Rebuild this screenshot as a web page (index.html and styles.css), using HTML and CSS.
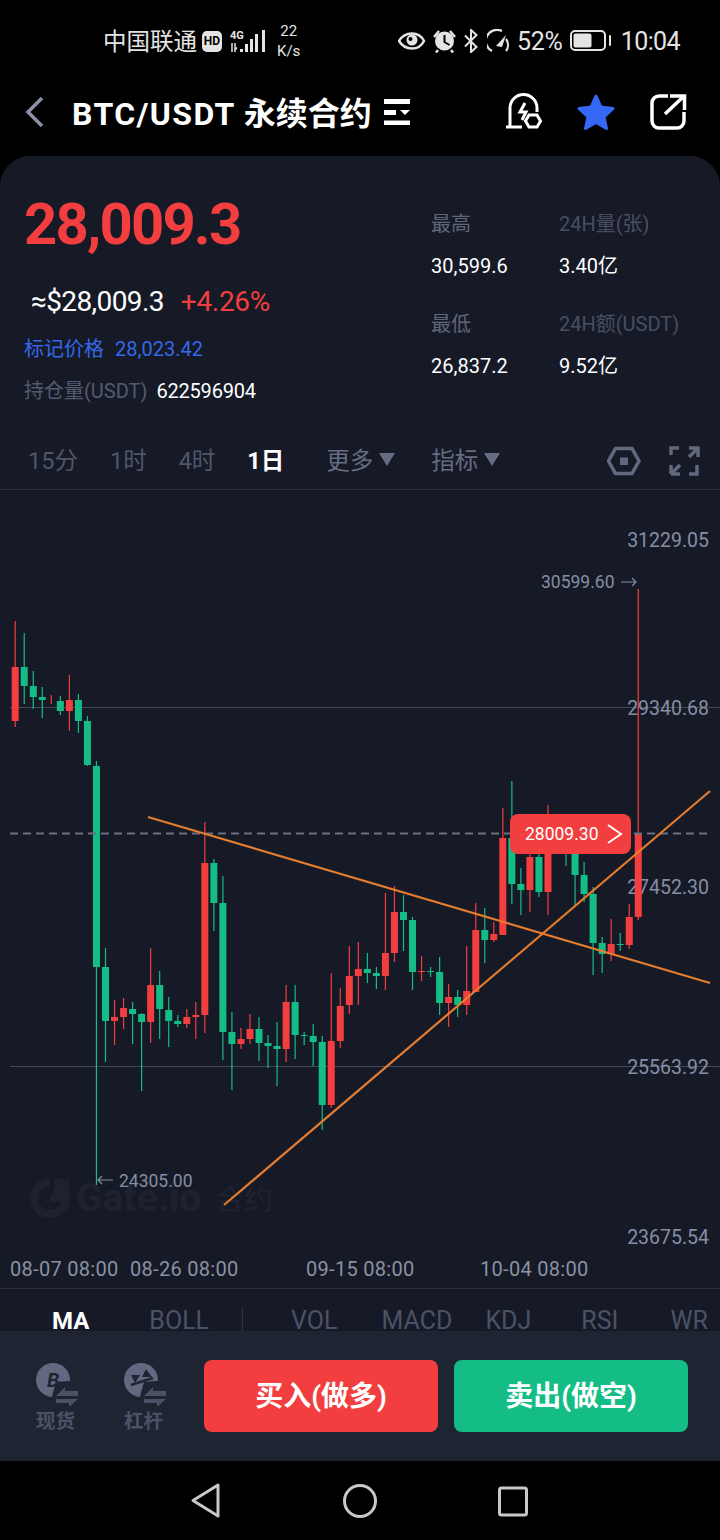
FILE: index.html
```html
<!DOCTYPE html>
<html lang="zh-CN">
<head>
    <meta charset="UTF-8">
    <meta name="viewport" content="width=device-width, initial-scale=1.0">
    <title>BTC/USDT 永续合约</title>
    <link rel="stylesheet" href="styles.css">
</head>
<body>
<div class="phone">

    <!-- Status Bar -->
    <div class="status-bar">
        <span class="carrier">中国联通</span>
        <span class="hd-badge">HD</span>
        <svg class="signal" width="38" height="26" viewBox="229 28 38 26">
            <text x="230" y="39" class="signal-text">4G</text>
            <path d="M232 43v9M235 45v5l2-2.500M235 43v9" stroke="#e4e4e4" stroke-width="1.500" fill="none"/>
            <rect x="240" y="49" width="3" height="3" fill="#e4e4e4"/>
            <rect x="245" y="44" width="3" height="8" fill="#e4e4e4"/>
            <rect x="250" y="39" width="3" height="13" fill="#e4e4e4"/>
            <rect x="255" y="34" width="3" height="18" fill="#e4e4e4"/>
            <rect x="262" y="30" width="3" height="22" fill="#e4e4e4"/>
        </svg>
        <div class="net-speed"><span>22</span><span>K/s</span></div>

        <div class="status-right">
            <svg width="28" height="20" viewBox="401 32 28 20">
                <path d="M402 42c6-10 20-10 25 0c-5 10-19 10-25 0z" fill="none" stroke="#e4e4e4" stroke-width="2.500"/>
                <circle cx="415" cy="41" r="5.500" fill="#e4e4e4"/>
                <circle cx="413.500" cy="40" r="2" fill="#000"/>
            </svg>
            <svg class="ml-6" width="25" height="24" viewBox="435 29 25 24">
                <circle cx="447.500" cy="41" r="9.500" fill="#e4e4e4"/>
                <path d="M447.500 35v7l5 3" fill="none" stroke="#000" stroke-width="2"/>
                <path d="M437 37l5-6M458 37l-5-6M441 50l-2 2.500M454 50l2 2.500" stroke="#e4e4e4" stroke-width="2.500" fill="none"/>
            </svg>
            <svg class="ml-7" width="15" height="24" viewBox="467 29 15 24">
                <path d="M468 35.500l11.500 11.500l-5.500 5v-22l5.500 5l-11.500 11.500" fill="none" stroke="#e4e4e4" stroke-width="2"/>
            </svg>
            <svg class="ml-8" width="25" height="24" viewBox="490 29 25 24">
                <path d="M495 51a10.500 10.500 0 0 1 10-20" fill="none" stroke="#e4e4e4" stroke-width="2.200"/>
                <path d="M509 39a10 10 0 0 1 0 12" fill="none" stroke="#e4e4e4" stroke-width="2.200"/>
                <path d="M499 46l10-11l-4 12z" fill="#e4e4e4"/>
            </svg>
            <span class="battery-pct">52%</span>
            <svg class="ml-7" width="42" height="22" viewBox="571 31 42 22">
                <rect x="572" y="32" width="34" height="19" rx="4" fill="none" stroke="#e4e4e4" stroke-width="2"/>
                <rect x="574.500" y="34.500" width="18" height="14" rx="2" fill="#e4e4e4"/>
                <rect x="610" y="36" width="2" height="11" rx="1" fill="#e4e4e4"/>
            </svg>
            <span class="clock">10:04</span>
        </div>
    </div>

    <!-- Title Bar -->
    <div class="title-bar">
        <svg class="back-icon" width="20" height="32" viewBox="25 97 20 32">
            <path d="M42 99l-14 14l14 14" fill="none" stroke="#8a92a7" stroke-width="3.500"/>
        </svg>
        <span class="title"><span class="title-pair">BTC/USDT</span> 永续合约</span>
        <svg class="filter-icon" width="26" height="26" viewBox="384 99 26 26">
            <rect x="384" y="99" width="26" height="5"/>
            <rect x="384" y="110" width="12" height="5"/>
            <path d="M400 110h10l-5 5z"/>
            <rect x="384" y="120.500" width="26" height="5"/>
        </svg>
        <div class="title-actions">
            <svg width="40" height="40" viewBox="503 92 40 40">
                <path d="M510 127v-19a13.500 13.500 0 0 1 27 0v4" fill="none" stroke="#fff" stroke-width="3"/>
                <path d="M506 127h16" fill="none" stroke="#fff" stroke-width="3"/>
                <path d="M525 103l-5 9h6l-4 8" fill="none" stroke="#fff" stroke-width="3"/>
                <path d="M529 115h8l3.500 6l-3.500 6h-8l-3.500-6z" fill="#000" stroke="#fff" stroke-width="3"/>
            </svg>
            <svg class="star" width="40" height="40" viewBox="576 92 40 40">
                <path d="M596 96l5 11l12 1.500l-9 8.500l2.500 11.500l-10.500-6l-10.500 6l2.500-11.500l-9-8.500l12-1.500z" fill="#3568f4" stroke="#3568f4" stroke-width="3" stroke-linejoin="round"/>
            </svg>
            <svg class="share" width="38" height="38" viewBox="650 93 38 38">
                <path d="M668 96h-9a7 7 0 0 0-7 7v18a7 7 0 0 0 7 7h18a7 7 0 0 0 7-7v-9" fill="none" stroke="#fff" stroke-width="3.500"/>
                <path d="M665 114l18-17M670 96h14.500v14" fill="none" stroke="#fff" stroke-width="3.500"/>
            </svg>
        </div>
    </div>

    <div class="panel">
        <!-- Price Summary -->
        <div class="summary">
            <div class="summary-left">
                <div class="last-price">28,009.3</div>
                <div class="sub-price">
                    <span class="usd">≈$28,009.3</span>
                    <span class="change">+4.26%</span>
                </div>
                <div class="mark-row">
                    <span>标记价格</span>
                    <span>28,023.42</span>
                </div>
                <div class="open-row">
                    <span class="open-label">持仓量(USDT)</span>
                    <span class="open-value">622596904</span>
                </div>
            </div>
            <div class="summary-right">
                <div class="stat"><span class="stat-label">最高</span><span class="stat-value">30,599.6</span></div>
                <div class="stat"><span class="stat-label dim">24H量(张)</span><span class="stat-value">3.40亿</span></div>
                <div class="stat"><span class="stat-label">最低</span><span class="stat-value">26,837.2</span></div>
                <div class="stat"><span class="stat-label dim">24H额(USDT)</span><span class="stat-value">9.52亿</span></div>
            </div>
        </div>

        <!-- Interval Tabs -->
        <div class="tabs">
            <span class="tab">15分</span>
            <span class="tab">1时</span>
            <span class="tab">4时</span>
            <span class="tab active">1日</span>
            <span class="tab more">更多<i class="caret"></i></span>
            <span class="tab more last-more">指标<i class="caret"></i></span>
            <svg class="tab-hex" width="34" height="30" viewBox="607 444 34 30">
                <path d="M615.500 446.500h16.500l7 12.500l-7 12.500h-16.500l-7-12.500z" fill="none" stroke="#62687d" stroke-width="3.500"/>
                <rect x="620" y="455.500" width="8" height="7.500" fill="#62687d"/>
            </svg>
            <svg class="tab-full" width="32" height="32" viewBox="668 443 32 32">
                <path d="M671 453v-7h8M689 446h9v9M698 446l-9 9M671 472v-9M671 472h9M671 472l9-9M697 463v9h-8" fill="none" stroke="#62687d" stroke-width="3.500"/>
            </svg>
        </div>

        <!-- Candlestick Chart -->
        <div class="chart">
            <svg id="chart-svg" width="720" height="798" viewBox="0 490 720 798">
                <!-- Watermark -->
                <path d="M50 1182a16 16 0 1 0 16 16h-16" fill="none" stroke="#1e2230" stroke-width="8"/>
                <rect x="54" y="1179" width="15" height="15" fill="#1e2230"/>
                <text x="76" y="1211" class="wm-text">Gate.io</text>
                <text x="215" y="1210" class="wm-cn">合约</text>

                <line x1="10" y1="707.500" x2="720" y2="707.500" class="grid-line"/>
                <line x1="10" y1="1066.500" x2="720" y2="1066.500" class="grid-line"/>

                <text x="709" y="547" class="axis-label">31229.05</text>
                <text x="709" y="715" class="axis-label">29340.68</text>
                <text x="709" y="894" class="axis-label">27452.30</text>
                <text x="709" y="1074" class="axis-label">25563.92</text>
                <text x="709" y="1244" class="axis-label">23675.54</text>

                <text x="10" y="1276" class="date-label">08-07 08:00</text>
                <text x="130" y="1276" class="date-label">08-26 08:00</text>
                <text x="306" y="1276" class="date-label">09-15 08:00</text>
                <text x="480" y="1276" class="date-label">10-04 08:00</text>

                <g id="candles"></g>

                <line x1="10" y1="833.500" x2="710" y2="833.500" class="last-line"/>
                <line x1="148" y1="817" x2="710" y2="983" class="trend-line"/>
                <line x1="224" y1="1205" x2="710" y2="791" class="trend-line"/>

                <text x="541" y="588" class="hl-label">30599.60</text>
                <path d="M621 582h15M632 578l4 4l-4 4" fill="none" stroke="#868ea3" stroke-width="1.200"/>
                <path d="M113 1180h-15M102 1176l-4 4l4 4" fill="none" stroke="#868ea3" stroke-width="1.200"/>
                <text x="119" y="1187" class="hl-label">24305.00</text>

                <!-- Last Price Tag -->
                <rect x="510" y="814" width="121" height="40" rx="8" fill="#f23e3e"/>
                <text x="525" y="840" class="tag-text">28009.30</text>
                <path d="M608 825l13 9l-13 9" fill="none" stroke="#fff" stroke-width="2"/>
            </svg>
        </div>

        <!-- Indicator Tabs -->
        <div class="indicators">
            <span class="ind active">MA</span>
            <span class="ind boll">BOLL</span>
            <i class="ind-split"></i>
            <span class="ind vol">VOL</span>
            <span class="ind macd">MACD</span>
            <span class="ind kdj">KDJ</span>
            <span class="ind rsi">RSI</span>
            <span class="ind wr">WR</span>
        </div>
    </div>

    <!-- Trade Bar -->
    <div class="trade-bar">
        <div class="trade-link">
            <svg width="44" height="44" viewBox="36 1362 44 44">
                <circle cx="53" cy="1380" r="17" fill="#62687f"/>
                <path d="M80 1380l-24 2l-4 14l6 12h24z" fill="#1f2433"/>
                <text x="47" y="1387" class="coin-b">B</text>
                <path d="M56 1396l9-9v4h13v5zM78 1399l-9 8v-4h-13v-4z" fill="#4c5266"/>
            </svg>
            <span>现货</span>
        </div>
        <div class="trade-link">
            <svg width="44" height="44" viewBox="124 1362 44 44">
                <circle cx="141" cy="1380" r="17" fill="#62687f"/>
                <path d="M168 1380l-24 2l-4 14l6 12h24z" fill="#1f2433"/>
                <path d="M131 1385l22-7" stroke="#1f2433" stroke-width="2.500" fill="none"/>
                <path d="M131 1375h9l-5 8zM146 1369l6 8h-10z" fill="#1f2433"/>
                <path d="M144 1396l9-9v4h13v5zM166 1399l-9 8v-4h-13v-4z" fill="#4c5266"/>
            </svg>
            <span>杠杆</span>
        </div>
        <button class="btn buy">买入(做多)</button>
        <button class="btn sell">卖出(做空)</button>
    </div>

    <!-- System Nav -->
    <div class="sys-nav">
        <svg width="34" height="38" viewBox="190 1482 34 38">
            <path d="M218 1485v31l-25-15.500z" fill="none" stroke="#c8c8c8" stroke-width="3" stroke-linejoin="round"/>
        </svg>
        <svg width="36" height="36" viewBox="342 1482 36 36">
            <circle cx="360" cy="1500" r="15.500" fill="none" stroke="#c8c8c8" stroke-width="3"/>
        </svg>
        <svg width="32" height="32" viewBox="496 1484 32 32">
            <rect x="498.500" y="1487" width="27" height="27" rx="2" fill="none" stroke="#c8c8c8" stroke-width="3"/>
        </svg>
    </div>
</div>

<script src="chart.js"></script>
</body>
</html>
```

FILE: styles.css
```css
/* Reset and basic styles */
html, body {
    margin: 0;
    padding: 0;
    background: #000;
    font-family: Roboto, "Noto Sans CJK SC", sans-serif;
}

.phone {
    width: 720px;
    height: 1540px;
    display: flex;
    flex-direction: column;
    overflow: hidden;
}

svg {
    display: block;
    flex: none;
}

/* Status Bar */
.status-bar {
    height: 82px;
    flex: none;
    display: flex;
    align-items: center;
    padding-left: 103px;
    color: #e4e4e4;
}

.carrier {
    font-size: 23.500px;
    width: 95px;
    padding-bottom: 3px;
    white-space: nowrap;
}

.hd-badge {
    width: 20px;
    height: 21px;
    margin-left: 4px;
    background: #e4e4e4;
    border-radius: 5px;
    color: #000;
    font-size: 12px;
    font-weight: 700;
    line-height: 21px;
    text-align: center;
}

.signal {
    margin-left: 7px;
}

.signal-text {
    font-size: 11px;
    font-weight: 700;
    fill: #e4e4e4;
}

.net-speed {
    display: flex;
    flex-direction: column;
    align-items: center;
    margin-left: 10px;
    font-size: 15px;
    line-height: 20px;
}

.status-right {
    display: flex;
    align-items: center;
    margin-left: auto;
    padding-right: 40px;
}

.ml-6 { margin-left: 6px; }
.ml-7 { margin-left: 7px; }
.ml-8 { margin-left: 8px; }

.battery-pct {
    margin-left: 5px;
    font-size: 25px;
    letter-spacing: -0.2px;
}

.clock {
    margin-left: 9px;
    font-size: 25px;
    letter-spacing: -0.6px;
}

/* Title Bar */
.title-bar {
    height: 74px;
    flex: none;
    box-sizing: border-box;
    padding: 0 32px 14px 25px;
    display: flex;
    align-items: center;
    color: #fff;
}

.title {
    margin-left: 27px;
    margin-bottom: 2px;
    font-size: 32px;
    font-weight: 700;
    white-space: nowrap;
}

.title-pair {
    letter-spacing: 1.400px;
}

.filter-icon {
    margin-left: 12px;
    fill: #fff;
}

.title-actions {
    display: flex;
    align-items: center;
    margin-left: auto;
}

.star {
    margin-left: 33px;
}

.share {
    margin-left: 34px;
}

/* Main Panel */
.panel {
    flex: 1;
    background: #161a27;
    border-radius: 30px 30px 0 0;
    overflow: hidden;
    display: flex;
    flex-direction: column;
}

/* Price Summary */
.summary {
    height: 277px;
    flex: none;
    box-sizing: border-box;
    padding-top: 38px;
    display: flex;
}

.summary-left {
    width: 431px;
    box-sizing: border-box;
    padding-left: 24px;
}

.last-price {
    color: #f23e3e;
    font-size: 58px;
    font-weight: 700;
    line-height: 60px;
    letter-spacing: -1.800px;
}

.sub-price {
    margin-top: 32px;
    padding-left: 7px;
    line-height: 32px;
    font-size: 28px;
    display: flex;
    gap: 17px;
}

.usd {
    color: #fff;
    letter-spacing: -0.6px;
}

.change {
    color: #f23e3e;
    letter-spacing: -0.3px;
}

.mark-row {
    margin-top: 19px;
    display: flex;
    gap: 11px;
    color: #3568e8;
    font-size: 20px;
    line-height: 24px;
}

.open-row {
    margin-top: 18px;
    display: flex;
    gap: 9px;
    font-size: 20px;
    line-height: 24px;
}

.open-label {
    color: #545a6e;
}

.open-value {
    color: #fff;
    letter-spacing: -0.2px;
}

.summary-right {
    flex: 1;
    display: grid;
    grid-template-columns: 128px 1fr;
    grid-auto-rows: min-content;
    row-gap: 34px;
    padding-top: 18px;
}

.stat {
    display: flex;
    flex-direction: column;
    gap: 18px;
    line-height: 24px;
    font-size: 20px;
    white-space: nowrap;
}

.stat-label {
    color: #60667a;
}

.stat-label.dim {
    color: #484e62;
}

.stat-value {
    color: #fff;
}

/* Interval Tabs */
.tabs {
    height: 57px;
    flex: none;
    box-sizing: border-box;
    border-bottom: 1px solid #2a2f3c;
    padding: 0 20px 4px 28px;
    display: flex;
    align-items: center;
    gap: 32px;
}

.tab {
    color: #50566a;
    font-size: 23.500px;
    white-space: nowrap;
}

.tab.active {
    color: #fff;
    font-weight: 700;
    margin-right: 10px;
}

.tab.more {
    color: #666c81;
    display: flex;
    align-items: center;
    gap: 6px;
}

.tab.last-more {
    margin-left: 4px;
}

.caret {
    width: 0;
    height: 0;
    border-left: 8px solid transparent;
    border-right: 8px solid transparent;
    border-top: 13px solid #666c81;
}

.tab-hex {
    margin-left: auto;
    margin-top: 4px;
}

.tab-full {
    margin-left: -5px;
    margin-top: 4px;
}

/* Chart */
.chart {
    height: 798px;
    flex: none;
}

.grid-line {
    stroke: #444957;
    stroke-width: 1;
}

.last-line {
    stroke: #6b7080;
    stroke-width: 2;
    stroke-dasharray: 8 5;
}

.trend-line {
    stroke: #e67c2e;
    stroke-width: 2.200;
}

.axis-label {
    fill: #868ea3;
    font-size: 19.500px;
    text-anchor: end;
}

.date-label {
    fill: #8a91a3;
    font-size: 20px;
    letter-spacing: 0.3px;
}

.hl-label {
    fill: #868ea3;
    font-size: 17.500px;
}

.tag-text {
    fill: #fff;
    font-size: 17.500px;
}

.wm-text {
    fill: #1e2230;
    font-size: 39px;
    font-weight: 700;
}

.wm-cn {
    fill: #1e2230;
    font-size: 29px;
}

/* Indicator Tabs */
.indicators {
    height: 43px;
    flex: none;
    box-sizing: border-box;
    border-top: 1px solid #2a2f3c;
    padding: 18px 0 0 52px;
    display: flex;
    overflow: hidden;
    font-size: 25px;
    line-height: 28px;
    color: #4c5266;
}

.ind.active {
    color: #fff;
    font-size: 24px;
    font-weight: 700;
}

.ind.boll { margin-left: 60px; }
.ind.vol { margin-left: 48px; }
.ind.macd { margin-left: 44px; }
.ind.kdj { margin-left: 33px; }
.ind.rsi { margin-left: 50px; }
.ind.wr { margin-left: 52px; }

.ind-split {
    width: 1px;
    height: 28px;
    margin-left: 33px;
    background: #2f3442;
}

/* Trade Bar */
.trade-bar {
    height: 130px;
    flex: none;
    background: #1f2433;
    box-sizing: border-box;
    padding-left: 36px;
    display: flex;
    align-items: center;
    gap: 44px;
}

.trade-link {
    width: 44px;
    padding-top: 4px;
    display: flex;
    flex-direction: column;
    color: #4c5266;
    font-size: 19.500px;
    font-weight: 700;
    line-height: 24px;
}

.trade-link span {
    margin-top: 4px;
    white-space: nowrap;
}

.coin-b {
    fill: #1f2433;
    font-size: 20px;
    font-weight: 700;
    font-style: italic;
}

.btn {
    width: 234px;
    height: 72px;
    border: none;
    border-radius: 8px;
    padding: 0 0 4px;
    color: #fff;
    font-family: inherit;
    font-size: 28px;
    font-weight: 700;
}

.buy {
    background: #f23e3e;
    margin-left: -8px;
}

.sell {
    background: #14bd85;
    margin-left: -28px;
}

/* System Nav */
.sys-nav {
    height: 79px;
    flex: none;
    display: grid;
    grid-template-columns: repeat(3, 153px);
    justify-content: center;
    justify-items: center;
    align-items: center;
}
```

FILE: chart.js
```js
// Candles: [color, wick high, body top, body bottom, wick low], page y coords
const RED = "#f23e3e";
const GREEN = "#14bd85";
const candles = [
    [RED, 621, 667, 721, 727],
    [GREEN, 633, 667, 686, 704],
    [GREEN, 671, 686, 697, 709],
    [GREEN, 687, 697, 700, 718],
    [RED, 695, 700, 700, 704],
    [GREEN, 696, 701, 711, 715],
    [RED, 675, 700, 711, 731],
    [GREEN, 694, 700, 721, 733],
    [GREEN, 716, 721, 765, 766],
    [GREEN, 761, 766, 967, 1185],
    [GREEN, 948, 967, 1021, 1062],
    [RED, 1000, 1017, 1021, 1045],
    [RED, 998, 1008, 1017, 1029],
    [GREEN, 1002, 1009, 1014, 1044],
    [GREEN, 1013, 1014, 1022, 1091],
    [RED, 948, 985, 1022, 1043],
    [GREEN, 971, 985, 1009, 1039],
    [GREEN, 997, 1010, 1021, 1047],
    [GREEN, 1015, 1021, 1024, 1027],
    [RED, 1009, 1017, 1024, 1028],
    [RED, 1002, 1015, 1017, 1039],
    [RED, 822, 863, 1015, 1033],
    [GREEN, 859, 863, 903, 931],
    [GREEN, 876, 903, 1032, 1060],
    [GREEN, 1012, 1032, 1044, 1090],
    [RED, 1028, 1039, 1044, 1049],
    [RED, 1014, 1029, 1039, 1044],
    [GREEN, 1017, 1029, 1043, 1061],
    [GREEN, 1035, 1043, 1046, 1068],
    [GREEN, 1022, 1046, 1049, 1086],
    [RED, 985, 1002, 1049, 1062],
    [GREEN, 985, 1002, 1035, 1059],
    [GREEN, 1032, 1035, 1036, 1045],
    [GREEN, 1024, 1036, 1042, 1066],
    [GREEN, 1036, 1042, 1105, 1130],
    [RED, 973, 1041, 1105, 1108],
    [RED, 988, 1006, 1041, 1048],
    [RED, 946, 976, 1005, 1014],
    [RED, 942, 969, 976, 1005],
    [GREEN, 953, 969, 973, 983],
    [GREEN, 967, 973, 976, 989],
    [RED, 893, 953, 976, 990],
    [RED, 886, 912, 953, 962],
    [GREEN, 895, 912, 920, 951],
    [GREEN, 917, 920, 972, 990],
    [RED, 956, 971, 972, 981],
    [GREEN, 967, 971, 972, 977],
    [GREEN, 957, 972, 1003, 1015],
    [RED, 984, 997, 1003, 1027],
    [GREEN, 990, 997, 1005, 1017],
    [RED, 946, 991, 1005, 1015],
    [RED, 903, 930, 992, 992],
    [GREEN, 908, 930, 940, 963],
    [RED, 922, 934, 940, 942],
    [RED, 808, 838, 935, 935],
    [GREEN, 781, 838, 884, 904],
    [GREEN, 868, 884, 890, 915],
    [RED, 850, 857, 890, 912],
    [GREEN, 850, 857, 892, 897],
    [RED, 805, 850, 892, 915],
    null,
    [GREEN, 850, 850, 850, 866],
    [GREEN, 850, 854, 875, 905],
    [GREEN, 862, 875, 894, 902],
    [GREEN, 887, 894, 943, 975],
    [GREEN, 937, 943, 954, 973],
    [RED, 919, 944, 954, 961],
    [GREEN, 933, 944, 945, 951],
    [RED, 904, 917, 945, 949],
    [RED, 589, 834, 917, 920]
];

const SVG_NS = "http://www.w3.org/2000/svg";
const group = document.getElementById("candles");

function addRect(x, y, w, h, color) {
    const rect = document.createElementNS(SVG_NS, "rect");
    rect.setAttribute("x", x);
    rect.setAttribute("y", y);
    rect.setAttribute("width", w);
    rect.setAttribute("height", h);
    rect.setAttribute("fill", color);
    group.appendChild(rect);
}

// Draw wick, then body
candles.forEach(function (c, i) {
    if (!c) return;
    const x = 15.2 + i * 9.03;
    addRect(x - 0.6, c[1], 1.2, c[4] - c[1], c[0]);
    if (c[3] > c[2]) {
        addRect(x - 3.5, c[2], 7, c[3] - c[2], c[0]);
    }
});
```
